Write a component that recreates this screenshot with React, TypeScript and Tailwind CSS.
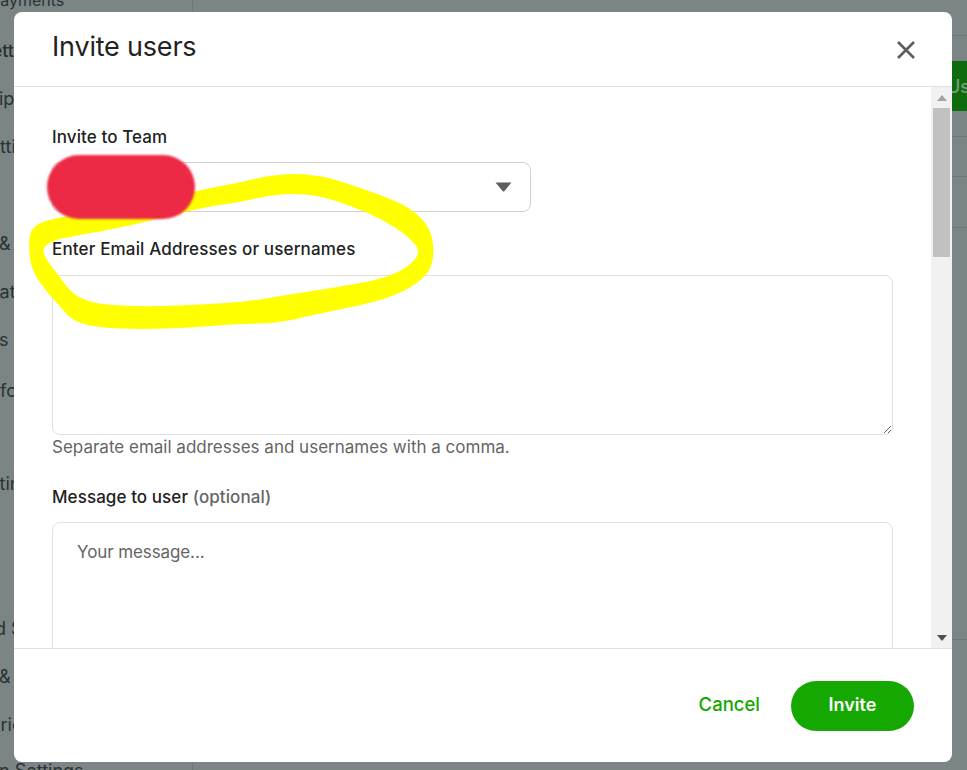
import React from "react";

const bgRows: { t: string; cls: string }[] = [
  { t: "Payments", cls: "-ml-[10px] pb-[4px] text-[16px]" },
  { t: "Settings", cls: "-ml-[20px] font-medium text-[18px]" },
  { t: "Membership", cls: "-ml-[92px] text-[18px]" },
  { t: "Settings", cls: "-ml-[22px] text-[18px]" },
  { t: "", cls: "" },
  { t: "& Invoices", cls: "-ml-[1px] text-[18px]" },
  { t: "Stats", cls: "-ml-[18px] text-[18px]" },
  { t: "s", cls: "-ml-[1px] text-[18px]" },
  { t: "fo", cls: "pt-[6px] text-[18px]" },
  { t: "", cls: "" },
  { t: "Settings", cls: "-ml-[28px] text-[18px]" },
  { t: "", cls: "" },
  { t: "", cls: "" },
  { t: "d Settings", cls: "-ml-[5px] text-[18px]" },
  { t: "& Teams", cls: "-ml-[1px] text-[18px]" },
  { t: "Priority", cls: "-ml-[11px] text-[18px]" },
  { t: "n Settings", cls: "-ml-[1px] pb-[6px] text-[18px]" },
];

// Outline of the marker stroke, traced as outer and inner edge (crop units: 3x, origin 30,150)
const outer: [number, number][] = [
  [0, 235], [60, 205], [300, 170], [490, 125], [560, 110], [640, 95], [700, 80], [790, 70], [880, 78], [960, 103],
  [1060, 138], [1130, 168], [1185, 213], [1210, 265], [1210, 342], [1178, 388], [1120, 425], [1040, 455], [850, 495],
  [740, 520], [600, 523], [480, 533], [340, 538], [200, 533], [130, 513], [92, 472], [47, 422], [6, 362], [-4, 300],
];
const inner: [number, number][] = [
  [35, 295], [70, 270], [150, 255], [260, 235], [350, 215], [450, 190], [530, 170], [640, 155], [720, 135], [800, 130],
  [880, 140], [970, 170], [1060, 210], [1130, 255], [1175, 305], [1130, 355], [1060, 385], [960, 405], [800, 430],
  [650, 455], [500, 465], [350, 470], [230, 465], [175, 455], [125, 430], [85, 375], [50, 330],
];

function closed(c: [number, number][]) {
  const p = c.map(([x, y]) => [x / 3 + 30, y / 3 + 150]);
  const mid = (a: number[], b: number[]) => [(a[0] + b[0]) / 2, (a[1] + b[1]) / 2];
  const s = mid(p[p.length - 1], p[0]);
  let d = `M${s[0].toFixed(1)} ${s[1].toFixed(1)}`;
  p.forEach((q, i) => {
    const m = mid(q, p[(i + 1) % p.length]);
    d += ` Q${q[0].toFixed(1)} ${q[1].toFixed(1)} ${m[0].toFixed(1)} ${m[1].toFixed(1)}`;
  });
  return d + " Z";
}

export default function App() {
  return (
    <div className="relative h-[770px] w-[967px] overflow-hidden bg-[#7b8585] font-['Inter','Liberation_Sans',sans-serif] text-[#222]">
      {/* Page behind the dialog */}
      <div className="flex h-full">
        <div className="-mt-[22px] flex w-[192px] shrink-0 flex-col">
          {bgRows.map((r, i) => (
            <div key={i} className={`flex h-[48.2px] shrink-0 items-center whitespace-nowrap text-[#2a3232] ${r.cls}`}>
              {r.t}
            </div>
          ))}
        </div>
        <div className="flex-1 border-l border-[#6e7878]">
          <div className="mt-[35px] border-t border-[#6e7878]" />
          <div className="mt-[25px] flex h-[50px] justify-end">
            <div className="flex w-[15px] items-center overflow-hidden whitespace-nowrap bg-[#0e6b0e] text-[18px] font-medium text-[#7b9d7b]">
              <span className="-ml-[5px]">Users</span>
            </div>
          </div>
          <div className="mt-[25px] border-t border-[#6e7878]" />
          <div className="mt-[39px] border-t border-[#6e7878]" />
          <div className="mt-[50px] border-t border-[#6e7878]" />
          <div className="mt-[411px] border-t border-[#6e7878]" />
        </div>
      </div>

      {/* Dialog */}
      <div className="absolute left-[14px] top-[12px] flex h-[750px] w-[938px] flex-col overflow-hidden rounded-[8px] bg-white">
        <div className="flex h-[75px] shrink-0 items-center justify-between border-b border-[#e0e0e0] pl-[38px] pr-[36px]">
          <h2 className="-mt-[5px] text-[27px] font-normal leading-[36px] tracking-[-0.2px] text-[#222]">Invite users</h2>
          <svg width="20" height="20" viewBox="0 0 20 20" className="mt-[2px]" fill="none" stroke="#5e5e5e" strokeWidth="2.6">
            <path d="M2 2 L18 18 M18 2 L2 18" />
          </svg>
        </div>

        <div className="flex min-h-0 flex-1">
          <div className="min-w-0 flex-1 overflow-hidden pl-[38px] pr-[38px]">
            <div className="pt-[38px] text-[17px] font-medium leading-[24px] tracking-[0.1px]">Invite to Team</div>
            <div className="mt-[13px] flex h-[50px] w-[479px] items-center justify-end rounded-[8px] border border-[#d0d0d0] pr-[18px]">
              <svg width="17" height="10" viewBox="0 0 17 10">
                <path d="M0.5 0.5 H16.5 L9.5 9 Q8.5 10 7.5 9 Z" fill="#5e5e5e" />
              </svg>
            </div>
            <div className="mt-[25px] text-[17px] font-medium leading-[24px] tracking-[0.16px]">Enter Email Addresses or usernames</div>
            <textarea className="mt-[14px] block h-[160px] w-[841px] rounded-[8px] border border-[#e0e0e0] outline-none" />
            <div className="text-[17px] leading-[24px] text-[#656565]">Separate email addresses and usernames with a comma.</div>
            <div className="mt-[26px] text-[17px] font-medium leading-[24px] tracking-[0.08px]">
              Message to user <span className="text-[#656565]">(optional)</span>
            </div>
            <textarea
              placeholder="Your message..."
              className="mt-[13px] block h-[160px] w-[841px] rounded-[8px] border border-[#e0e0e0] px-[24px] py-[15px] text-[17px] leading-[28px] tracking-[-0.1px] outline-none placeholder:text-[#656565]"
            />
          </div>
          <div className="flex w-[21px] shrink-0 flex-col items-center bg-[#f1f1f1]">
            <div className="flex h-[21px] w-full items-center justify-center">
              <svg width="10" height="6" viewBox="0 0 10 6"><path d="M5 0 L10 6 H0 Z" fill="#a3a3a3" /></svg>
            </div>
            <div className="h-[149px] w-[17px] bg-[#c1c1c1]" />
            <div className="flex-1" />
            <div className="flex h-[21px] w-full items-center justify-center">
              <svg width="10" height="6" viewBox="0 0 10 6"><path d="M0 0 H10 L5 6 Z" fill="#505050" /></svg>
            </div>
          </div>
        </div>

        <div className="flex h-[114px] shrink-0 items-center justify-end gap-[31px] border-t border-[#e0e0e0] pr-[38px]">
          <span className="-mt-[2px] text-[18.5px] font-medium text-[#14a800]">Cancel</span>
          <button className="flex h-[50px] w-[123px] items-center justify-center rounded-full bg-[#14a800] pb-[2px] text-[18px] font-semibold text-white">
            Invite
          </button>
        </div>
      </div>

      {/* Hand-drawn annotations over the screenshot */}
      <svg className="pointer-events-none absolute left-0 top-0" width="967" height="770" viewBox="0 0 967 770">
        <path d={`${closed(outer)} ${closed(inner)}`} fill="#ffff00" fillRule="evenodd" />
      </svg>
      <div className="absolute left-[47px] top-[155px] h-[64px] w-[148px] rounded-[32px] bg-[#ec2a45] blur-[1px]" />
    </div>
  );
}
